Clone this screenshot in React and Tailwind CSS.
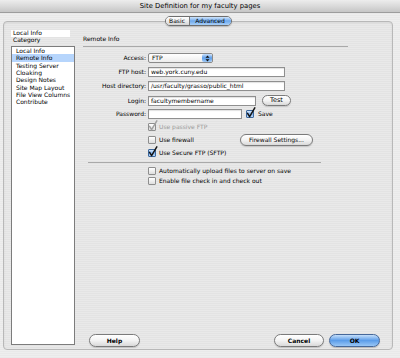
import React from 'react';

const categories = [
    'Local Info',
    'Remote Info',
    'Testing Server',
    'Cloaking',
    'Design Notes',
    'Site Map Layout',
    'File View Columns',
    'Contribute'
];

// Aqua style checkbox, the tick pokes out above the box like the real one
const Check = ({ checked, disabled }) => (
    <span className="relative block w-[8px] h-[8px] shrink-0">
        <span
            className={
                checked && !disabled
                    ? 'block w-full h-full rounded-[1px] border border-[#3b679c] bg-gradient-to-b from-[#d6e8fc] via-[#7fb2ee] to-[#b9d8fa]'
                    : 'block w-full h-full rounded-[1px] border border-[#8e8e8e] bg-gradient-to-b from-white to-[#dedede]'
            }
        />
        {checked && (
            <svg className="absolute left-[0px] top-[-3px]" width="10" height="11" viewBox="0 0 10 11">
                <path
                    d="M1.6 6.4 L3.6 9.6 L8.8 0.8"
                    stroke={disabled ? '#a2a2a2' : '#141414'}
                    strokeWidth="1.5"
                    fill="none"
                    strokeLinecap="round"
                    strokeLinejoin="round"
                />
            </svg>
        )}
    </span>
);

const PillButton = ({ children, className }) => (
    <div
        className={`h-[13px] rounded-full border border-[#7b7b7b] bg-gradient-to-b from-white via-[#f3f3f3] to-[#d9d9d9] shadow-[0_1px_1px_rgba(0,0,0,0.15)] flex items-center justify-center leading-none whitespace-nowrap ${className}`}
    >
        {children}
    </div>
);

const TextInput = ({ value, className }) => (
    <div
        className={`h-[10px] border border-[#8f8f8f] bg-white shadow-[inset_0_1px_1px_rgba(0,0,0,0.12)] pl-[2px] text-[6px] leading-[8px] whitespace-nowrap overflow-hidden ${className}`}
    >
        {value}
    </div>
);

const Label = ({ children }) => (
    <div className="w-[63px] shrink-0 text-right text-[6px] leading-[10px] whitespace-nowrap">{children}</div>
);

export default function App() {
    return (
        <div className="w-[400px] h-[358px] overflow-hidden flex flex-col text-black font-[DejaVu_Sans,Noto_Sans,sans-serif] bg-[repeating-linear-gradient(to_bottom,#eeeeee_0px,#eeeeee_1px,#e9e9e9_1px,#e9e9e9_2px)]">
            {/* Title bar */}
            <div className="h-[13px] shrink-0 border-b border-[#9d9d9d] bg-gradient-to-b from-[#ededed] via-[#dadada] to-[#c6c6c6] flex items-center justify-center text-[6.8px] leading-none">
                Site Definition for my faculty pages
            </div>

            {/* Tabs */}
            <div className="relative z-10 mt-[3px] ml-[3px] w-[390px] flex justify-center">
                <div className="flex h-[10px] rounded-full border border-[#6e6e6e] overflow-hidden text-[6px] leading-none shadow-[0_1px_1px_rgba(0,0,0,0.2)]">
                    <div className="w-[24px] flex items-center justify-center bg-gradient-to-b from-white via-[#ececec] to-[#d4d4d4] border-r border-[#7a7a7a]">
                        Basic
                    </div>
                    <div className="w-[41px] flex items-center justify-center bg-gradient-to-b from-[#cfe4fb] via-[#6ea9ec] to-[#a9d0f8]">
                        Advanced
                    </div>
                </div>
            </div>

            {/* Group box */}
            <div className="-mt-[5px] ml-[3px] w-[390px] h-[329px] rounded-[4px] border border-[#b8b8b8] shadow-[inset_0_1px_2px_rgba(0,0,0,0.08)] bg-[repeating-linear-gradient(to_bottom,#e9e9e9_0px,#e9e9e9_1px,#e3e3e3_1px,#e3e3e3_2px)] flex">
                {/* Category column */}
                <div className="pl-[7px] pt-[8px] w-[71px] shrink-0 flex flex-col">
                    <div className="w-[59px] h-[7px] bg-white overflow-hidden pl-[2px]">
                        <div className="-mt-[1px] text-[6px] leading-[8px]">Local Info</div>
                    </div>
                    <div className="-mt-[1px] pl-[2px] text-[6px] leading-[7px]">Category</div>
                    <div className="mt-[3px] w-[64px] h-[299px] border border-[#7c7c7c] bg-white text-[6px]">
                        {categories.map((c) => (
                            <div
                                key={c}
                                className={
                                    c === 'Remote Info'
                                        ? 'h-[7.35px] leading-[7.35px] px-[4px] bg-[#b6d5fc] whitespace-nowrap'
                                        : 'h-[7.35px] leading-[7.35px] px-[4px] whitespace-nowrap'
                                }
                            >
                                {c}
                            </div>
                        ))}
                    </div>
                </div>

                {/* Remote info panel */}
                <div className="flex-1 pl-[8px] pt-[13px] flex flex-col">
                    <div className="h-[8px] text-[6px] leading-[8px]">Remote Info</div>
                    <div className="mt-[3px] w-[265px] h-px bg-[#a9a9a9]" />

                    <div className="mt-[6px] flex items-center gap-[2px]">
                        <Label>Access:</Label>
                        <div className="w-[65px] h-[10px] rounded-[2px] border border-[#8a8a8a] bg-gradient-to-b from-white to-[#ececec] flex items-center justify-between">
                            <span className="pl-[3px] text-[6px] leading-none">FTP</span>
                            <span className="w-[10px] h-full rounded-[2px] bg-gradient-to-b from-[#c9e0fb] via-[#5f9fe9] to-[#9fc9f6] flex items-center justify-center">
                                <svg width="5" height="7" viewBox="0 0 5 7">
                                    <path d="M2.5 0.5 L4.5 2.8 L0.5 2.8 Z M2.5 6.5 L4.5 4.2 L0.5 4.2 Z" fill="#111" />
                                </svg>
                            </span>
                        </div>
                    </div>

                    <div className="mt-[4px] flex items-center gap-[2px]">
                        <Label>FTP host:</Label>
                        <TextInput value="web.york.cuny.edu" className="w-[137px]" />
                    </div>

                    <div className="mt-[4px] flex items-center gap-[2px]">
                        <Label>Host directory:</Label>
                        <TextInput value="/usr/faculty/grasso/public_html" className="w-[137px]" />
                    </div>

                    <div className="mt-[4px] flex items-center gap-[2px]">
                        <Label>Login:</Label>
                        <TextInput value="facultymembername" className="w-[108px]" />
                        <PillButton className="ml-[4px] w-[29px] !h-[11px] text-[6.5px]">Test</PillButton>
                    </div>

                    <div className="mt-[3px] flex items-center gap-[2px]">
                        <Label>Password:</Label>
                        <TextInput value="" className="w-[94px]" />
                        <span className="ml-[2px]">
                            <Check checked />
                        </span>
                        <span className="ml-[2px] text-[6px] leading-none">Save</span>
                    </div>

                    <div className="mt-[1px] pl-[65px] flex flex-col text-[6px]">
                        <div className="h-[13px] flex items-center gap-[3px] text-[#9a9a9a]">
                            <Check checked disabled />
                            <span className="leading-none">Use passive FTP</span>
                        </div>
                        <div className="h-[13px] flex items-center gap-[3px]">
                            <Check />
                            <span className="w-[78px] leading-none">Use firewall</span>
                            <PillButton className="w-[73px] !h-[12px] text-[6px]">Firewall Settings...</PillButton>
                        </div>
                        <div className="h-[13px] flex items-center gap-[3px]">
                            <Check checked />
                            <span className="leading-none">Use Secure FTP (SFTP)</span>
                        </div>
                    </div>

                    <div className="mt-[3px] ml-[5px] w-[233px] h-px bg-[#a9a9a9]" />

                    <div className="mt-[3px] pl-[65px] flex flex-col text-[6px]">
                        <div className="h-[10px] flex items-center gap-[3px]">
                            <Check />
                            <span className="leading-none">Automatically upload files to server on save</span>
                        </div>
                        <div className="h-[10px] flex items-center gap-[3px]">
                            <Check />
                            <span className="leading-none">Enable file check in and check out</span>
                        </div>
                    </div>

                    <div className="flex-1" />

                    {/* Dialog buttons */}
                    <div className="mb-[2px] flex items-center">
                        <PillButton className="ml-[6px] w-[51px] font-bold text-[6px]">Help</PillButton>
                        <PillButton className="ml-[134px] w-[50px] font-bold text-[6px]">Cancel</PillButton>
                        <div className="ml-[5px] w-[51px] h-[13px] rounded-full border border-[#46689a] bg-gradient-to-b from-[#c4def9] via-[#5c9de9] to-[#98c6f5] shadow-[0_1px_1px_rgba(0,0,0,0.2)] flex items-center justify-center font-bold text-[6px] leading-none">
                            OK
                        </div>
                    </div>
                </div>
            </div>
        </div>
    );
}
